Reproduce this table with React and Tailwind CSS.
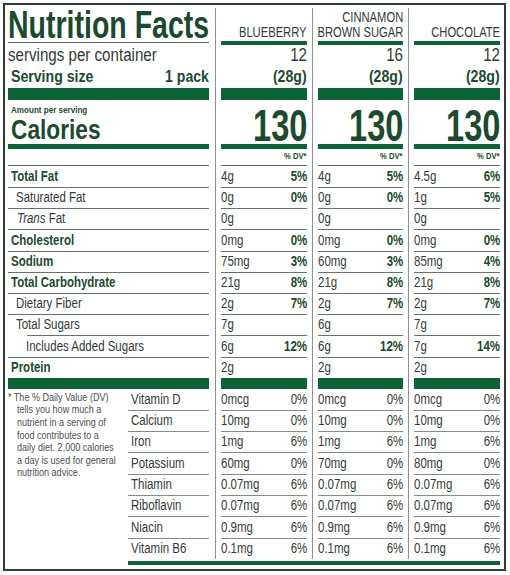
const nutrients = [
  { label: 'Total Fat', bold: true, pad: 'pl-[3px]' },
  { label: 'Saturated Fat', pad: 'pl-[8px]' },
  { label: 'Trans Fat', pad: 'pl-[9px]', italic: 'Trans' },
  { label: 'Cholesterol', bold: true, pad: 'pl-[3px]' },
  { label: 'Sodium', bold: true, pad: 'pl-[3px]' },
  { label: 'Total Carbohydrate', bold: true, pad: 'pl-[3px]' },
  { label: 'Dietary Fiber', pad: 'pl-[8px]' },
  { label: 'Total Sugars', pad: 'pl-[8px]', line: 'indent' },
  { label: 'Includes Added Sugars', pad: 'pl-[18px]' },
  { label: 'Protein', bold: true, pad: 'pl-[3px]', line: 'none' },
]

const vitamins = ['Vitamin D', 'Calcium', 'Iron', 'Potassium', 'Thiamin', 'Riboflavin', 'Niacin', 'Vitamin B6']

const footnote = [
  '* The % Daily Value (DV)',
  'tells you how much a',
  'nutrient in a serving of',
  'food contributes to a',
  'daily diet. 2,000 calories',
  'a day is used for general',
  'nutrition advice.',
]

const flavors = [
  {
    name: ['BLUEBERRY'],
    servings: '12',
    width: 'w-[86px]',
    gap: 'ml-[6px]',
    rows: [['4g', '5%'], ['0g', '0%'], ['0g', ''], ['0mg', '0%'], ['75mg', '3%'], ['21g', '8%'], ['2g', '7%'], ['7g', ''], ['6g', '12%'], ['2g', '']],
    vits: [['0mcg', '0%'], ['10mg', '0%'], ['1mg', '6%'], ['60mg', '0%'], ['0.07mg', '6%'], ['0.07mg', '6%'], ['0.9mg', '6%'], ['0.1mg', '6%']],
  },
  {
    name: ['CINNAMON', 'BROWN SUGAR'],
    servings: '16',
    width: 'w-[85px]',
    gap: 'ml-[5px]',
    rows: [['4g', '5%'], ['0g', '0%'], ['0g', ''], ['0mg', '0%'], ['60mg', '3%'], ['21g', '8%'], ['2g', '7%'], ['6g', ''], ['6g', '12%'], ['2g', '']],
    vits: [['0mcg', '0%'], ['10mg', '0%'], ['1mg', '6%'], ['70mg', '0%'], ['0.07mg', '6%'], ['0.07mg', '6%'], ['0.9mg', '6%'], ['0.1mg', '6%']],
  },
  {
    name: ['CHOCOLATE'],
    servings: '12',
    width: 'w-[86px]',
    gap: 'ml-[5px]',
    rows: [['4.5g', '6%'], ['1g', '5%'], ['0g', ''], ['0mg', '0%'], ['85mg', '4%'], ['21g', '8%'], ['2g', '7%'], ['7g', ''], ['7g', '14%'], ['2g', '']],
    vits: [['0mcg', '0%'], ['10mg', '0%'], ['1mg', '6%'], ['80mg', '0%'], ['0.07mg', '6%'], ['0.07mg', '6%'], ['0.9mg', '6%'], ['0.1mg', '6%']],
  },
]

// condensed type: Liberation Sans squeezed sideways, like the label's narrow face
const N = ({ children, right, s = 'scale-x-[0.82]', className = '' }) => (
  <span className={`inline-block whitespace-nowrap ${right ? 'origin-right' : 'origin-left'} ${s} ${className}`}>{children}</span>
)

const Row = ({ children, line = 'full', className = '' }) => (
  <div className="flex h-[21.2px] flex-col">
    <div className={`flex flex-1 items-center ${className}`}>{children}</div>
    {line === 'full' && <div className="h-px bg-[#67726a]" />}
    {line === 'indent' && <div className="ml-[19px] h-px bg-[#67726a]" />}
  </div>
)

const VitRow = ({ children, last, className = '' }) => (
  <div className="flex h-[21.3px] flex-col">
    <div className={`flex flex-1 items-center ${className}`}>{children}</div>
    {!last && <div className="h-px bg-[#858c86]" />}
  </div>
)

const LabelColumn = () => (
  <div className="flex w-[201px] shrink-0 flex-col">
    <div className="h-[34px] pt-[1px]">
      <h1 className="text-[38px] leading-[33px] font-bold text-[#1b4a2f]">
        <N s="scale-x-[0.75]">Nutrition Facts</N>
      </h1>
    </div>
    <div className="h-px bg-[#5f6a62]" />
    <div className="h-[2px]" />
    <div className="flex h-[20px] items-center text-[18px] text-[#333b36]">
      <N s="scale-x-[0.84]">servings per container</N>
    </div>
    <div className="flex h-[23px] items-center justify-between pl-[3px] text-[17px] font-bold text-[#1b4a2f]">
      <N s="scale-x-[0.83]">Serving size</N>
      <N right s="scale-x-[0.83]">1 pack</N>
    </div>
    <div className="h-[12px] bg-[#0c6336]" />
    <div className="flex h-[44px] flex-col pl-[3px] text-[#1b4a2f]">
      <div className="mt-[5px] text-[9.5px] leading-[10px] font-bold">
        <N s="scale-x-[0.85]">Amount per serving</N>
      </div>
      <div className="mt-[2px] text-[28px] leading-[26px] font-bold">
        <N s="scale-x-[0.81]">Calories</N>
      </div>
    </div>
    <div className="h-[5px] bg-[#0c6336]" />
    <div className="h-[16px]" />
    <div className="h-px bg-[#5f6a62]" />
    {nutrients.map((n) => (
      <Row key={n.label} line={n.line} className={`${n.pad} text-[14px] ${n.bold ? 'font-bold text-[#1b4a2f]' : 'text-[#333b36]'}`}>
        <N>
          {n.italic ? (
            <>
              <i>{n.italic}</i> Fat
            </>
          ) : (
            n.label
          )}
        </N>
      </Row>
    ))}
    <div className="h-[11px] bg-[#0c6336]" />
    <div className="flex">
      <div className="w-[120px] shrink-0 pt-[2px] text-[11px] leading-[12.6px] text-[#4a504c]">
        {footnote.map((t, i) => (
          <div key={i} className={i === 0 ? '' : 'pl-[9px]'}>
            <N>{t}</N>
          </div>
        ))}
      </div>
      <div className="w-[81px]">
        {vitamins.map((v, i) => (
          <VitRow key={v} last={i === vitamins.length - 1} className="pl-[3px] text-[14px] text-[#333b36]">
            <N>{v}</N>
          </VitRow>
        ))}
      </div>
    </div>
  </div>
)

const FlavorColumn = ({ f }) => (
  <div className={`${f.gap} shrink-0 border-l border-[#8c918d] pl-[5px]`}>
    <div className={`flex ${f.width} flex-col`}>
      <div className="flex h-[33px] flex-col items-end justify-end pb-[1px] text-[14px] leading-[15px] text-[#333b36]">
        {f.name.map((n) => (
          <N key={n} right s="scale-x-[0.8]">
            {n}
          </N>
        ))}
      </div>
      <div className="h-[4px] bg-[#0c6336]" />
      <div className="flex h-[20px] items-center justify-end text-[18px] text-[#333b36]">
        <N right s="scale-x-[0.84]">{f.servings}</N>
      </div>
      <div className="flex h-[23px] items-center justify-end text-[17px] font-bold text-[#1b4a2f]">
        <N right s="scale-x-[0.83]">(28g)</N>
      </div>
      <div className="h-[12px] bg-[#0c6336]" />
      <div className="flex h-[44px] justify-end pt-[4px] text-[44px] leading-[44px] font-bold text-[#1b4a2f]">
        <N right s="scale-x-[0.74]">130</N>
      </div>
      <div className="h-[5px] bg-[#0c6336]" />
      <div className="flex h-[16px] items-center justify-end text-[9px] font-bold text-[#1b4a2f]">
        <N right s="scale-x-[0.85]">% DV*</N>
      </div>
      <div className="h-px bg-[#5f6a62]" />
      {f.rows.map(([amt, dv], i) => (
        <Row key={i} line={i === 9 ? 'none' : 'full'} className="justify-between text-[14px]">
          <N className="text-[#333b36]">{amt}</N>
          <N right className="font-bold text-[#1b4a2f]">{dv}</N>
        </Row>
      ))}
      <div className="h-[11px] bg-[#0c6336]" />
      {f.vits.map(([amt, dv], i) => (
        <VitRow key={i} last={i === 7} className="justify-between text-[14px] text-[#333b36]">
          <N>{amt}</N>
          <N right>{dv}</N>
        </VitRow>
      ))}
    </div>
  </div>
)

const App = () => {
  return (
    <div className="min-h-screen bg-white pt-[3px] pl-[3px] font-['Liberation_Sans',Arial,sans-serif]">
      <div className="w-[503px] border-2 border-[#2f3d34] pt-[3px] pr-[4px] pb-[4px] pl-[3px]">
        <div className="flex">
          <LabelColumn />
          {flavors.map((f) => (
            <FlavorColumn key={f.servings + f.name[0]} f={f} />
          ))}
        </div>
        <div className="mt-[2px] ml-[120px] h-[4px] bg-[#0c6336]" />
      </div>
    </div>
  )
}

export default App
